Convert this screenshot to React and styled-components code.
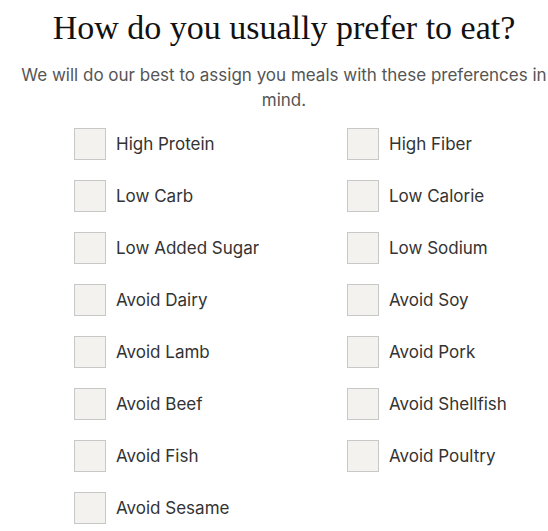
import React from 'react';
import styled, { createGlobalStyle } from 'styled-components';

const GlobalStyle = createGlobalStyle`
  body {
    margin: 0;
    background: #fff;
    font-family: Inter, "Noto Sans", sans-serif;
  }
`;

const Page = styled.div`
  box-sizing: border-box;
  width: 548px;
  padding: 8px 0 0 20px;
`;

const Title = styled.h1`
  margin: 0;
  text-align: center;
  font-family: "Liberation Serif", "DejaVu Serif", serif;
  font-weight: 400;
  font-size: 34px;
  line-height: 40px;
  color: #111;
`;

const Subtitle = styled.p`
  margin: 15px 0 0;
  text-align: center;
  font-size: 17px;
  line-height: 25px;
  color: #555;
`;

const Grid = styled.div`
  display: grid;
  grid-template-columns: 273px 1fr;
  row-gap: 20px;
  padding: 15px 0 0 54px;
`;

const Option = styled.label`
  display: flex;
  align-items: center;
  gap: 10px;
  height: 32px;
  cursor: pointer;
`;

const Box = styled.input.attrs({ type: 'checkbox' })`
  appearance: none;
  margin: 0;
  width: 32px;
  height: 32px;
  box-sizing: border-box;
  border: 1px solid #c8c8c8;
  background: #f3f2ee;
  flex-shrink: 0;
  cursor: pointer;
  &:checked {
    background: #222;
  }
`;

const Label = styled.span`
  font-size: 17px;
  color: #333;
  white-space: nowrap;
`;

const options = [
  'High Protein', 'High Fiber',
  'Low Carb', 'Low Calorie',
  'Low Added Sugar', 'Low Sodium',
  'Avoid Dairy', 'Avoid Soy',
  'Avoid Lamb', 'Avoid Pork',
  'Avoid Beef', 'Avoid Shellfish',
  'Avoid Fish', 'Avoid Poultry',
  'Avoid Sesame',
];

export default function App() {
  return (
    <Page>
      <GlobalStyle />
      <Title>How do you usually prefer to eat?</Title>
      <Subtitle>We will do our best to assign you meals with these preferences in mind.</Subtitle>
      <Grid>
        {options.map((o) => (
          <Option key={o}>
            <Box />
            <Label>{o}</Label>
          </Option>
        ))}
      </Grid>
    </Page>
  );
}
